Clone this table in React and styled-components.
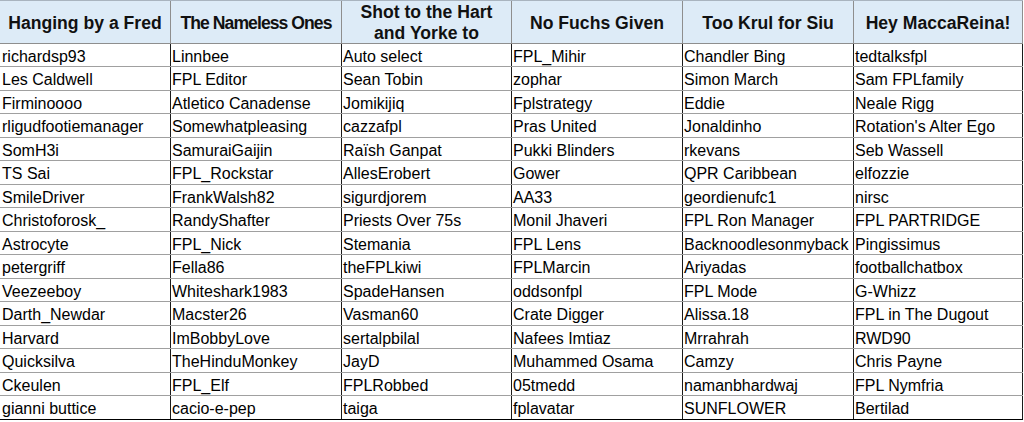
import React from 'react';
import styled, { createGlobalStyle } from 'styled-components';

const GlobalStyle = createGlobalStyle`
  html, body {
    margin: 0;
    padding: 0;
    background: #ffffff;
  }
  * {
    box-sizing: border-box;
  }
`;

const COLS = '171px 171px 170px 171px 171px 169px';

const Sheet = styled.div`
  width: 1024px;
  height: 422px;
  display: flex;
  flex-direction: column;
  font-family: 'Liberation Sans', Arial, sans-serif;
  color: #000;
  overflow: hidden;
`;

const HeaderRow = styled.div`
  display: grid;
  grid-template-columns: ${COLS};
  width: 1023px;
  height: 44px;
  background: #ddebf7;
  border-top: 1px solid #a9b4bf;
  border-bottom: 1px solid #8e8e8e;
`;

const HeaderCell = styled.div`
  display: flex;
  align-items: center;
  justify-content: center;
  text-align: center;
  border-right: 1px solid #8e8e8e;
  font-weight: bold;
  font-size: 17.6px;
  letter-spacing: ${({ tight }) => (tight ? '-0.95px' : 'normal')};
  white-space: ${({ tight }) => (tight ? 'nowrap' : 'normal')};
  line-height: 21px;
  color: #111;
  padding: 1px 2px 0;
`;

const Row = styled.div`
  display: grid;
  grid-template-columns: ${COLS};
  width: 1023px;
  height: ${({ tall }) => (tall ? '24px' : '23px')};
  border-bottom: 1px solid ${({ last }) => (last ? '#000' : '#a0a0a0')};
`;

const Cell = styled.div`
  display: flex;
  align-items: center;
  padding: 3px 2px 0 ${({ first }) => (first ? '2px' : '1px')};
  border-right: 1px solid #1a1a1a;
  font-size: 16px;
  white-space: nowrap;
  overflow: hidden;
`;

const teams = [
  { name: 'Hanging by a Fred' },
  { name: 'The Nameless Ones', tight: true },
  { name: 'Shot to the Hart and Yorke to' },
  { name: 'No Fuchs Given' },
  { name: 'Too Krul for Siu' },
  { name: 'Hey MaccaReina!' },
];

const rows = [
  ['richardsp93', 'Linnbee', 'Auto select', 'FPL_Mihir', 'Chandler Bing', 'tedtalksfpl'],
  ['Les Caldwell', 'FPL Editor', 'Sean Tobin', 'zophar', 'Simon March', 'Sam FPLfamily'],
  ['Firminoooo', 'Atletico Canadense', 'Jomikijiq', 'Fplstrategy', 'Eddie', 'Neale Rigg'],
  ['rligudfootiemanager', 'Somewhatpleasing', 'cazzafpl', 'Pras United', 'Jonaldinho', "Rotation's Alter Ego"],
  ['SomH3i', 'SamuraiGaijin', 'Raïsh Ganpat', 'Pukki Blinders', 'rkevans', 'Seb Wassell'],
  ['TS Sai', 'FPL_Rockstar', 'AllesErobert', 'Gower', 'QPR Caribbean', 'elfozzie'],
  ['SmileDriver', 'FrankWalsh82', 'sigurdjorem', 'AA33', 'geordienufc1', 'nirsc'],
  ['Christoforosk_', 'RandyShafter', 'Priests Over 75s', 'Monil Jhaveri', 'FPL Ron Manager', 'FPL PARTRIDGE'],
  ['Astrocyte', 'FPL_Nick', 'Stemania', 'FPL Lens', 'Backnoodlesonmyback', 'Pingissimus'],
  ['petergriff', 'Fella86', 'theFPLkiwi', 'FPLMarcin', 'Ariyadas', 'footballchatbox'],
  ['Veezeeboy', 'Whiteshark1983', 'SpadeHansen', 'oddsonfpl', 'FPL Mode', 'G-Whizz'],
  ['Darth_Newdar', 'Macster26', 'Vasman60', 'Crate Digger', 'Alissa.18', 'FPL in The Dugout'],
  ['Harvard', 'ImBobbyLove', 'sertalpbilal', 'Nafees Imtiaz', 'Mrrahrah', 'RWD90'],
  ['Quicksilva', 'TheHinduMonkey', 'JayD', 'Muhammed Osama', 'Camzy', 'Chris Payne'],
  ['Ckeulen', 'FPL_Elf', 'FPLRobbed', '05tmedd', 'namanbhardwaj', 'FPL Nymfria'],
  ['gianni buttice', 'cacio-e-pep', 'taiga', 'fplavatar', 'SUNFLOWER', 'Bertilad'],
];

export default function App() {
  return (
    <>
      <GlobalStyle />
      <Sheet>
        <HeaderRow>
          {teams.map((t) => (
            <HeaderCell key={t.name} tight={t.tight}>{t.name}</HeaderCell>
          ))}
        </HeaderRow>
        {rows.map((r, i) => (
          <Row key={i} tall={i % 2 === 1} last={i === rows.length - 1}>
            {r.map((name, j) => (
              <Cell key={j} first={j === 0}>{name}</Cell>
            ))}
          </Row>
        ))}
      </Sheet>
    </>
  );
}
